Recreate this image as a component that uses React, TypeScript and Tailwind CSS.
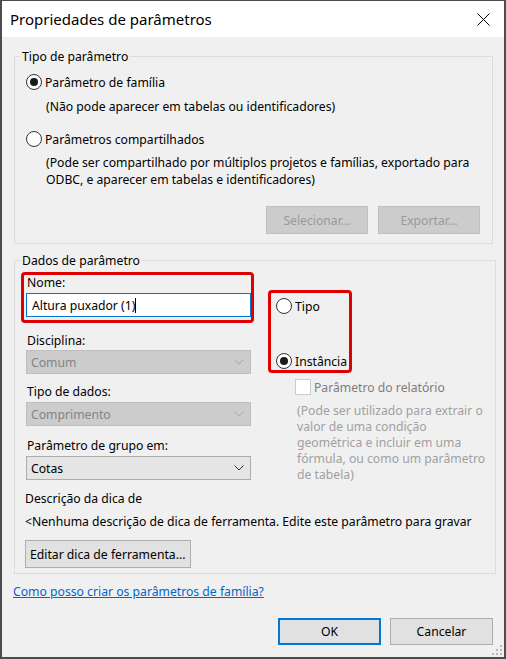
const Radio = ({ checked }: { checked?: boolean }) => (
  <span className="w-[16px] h-[16px] rounded-full border border-[#333333] bg-white flex items-center justify-center shrink-0">
    {checked && <span className="w-[8px] h-[8px] rounded-full bg-[#1b1b1b]" />}
  </span>
);

const Chevron = ({ color }: { color: string }) => (
  <svg width="10" height="6" viewBox="0 0 10 6" className="shrink-0">
    <path d="M0.5 0.5 L5 5 L9.5 0.5" fill="none" stroke={color} strokeWidth="1" />
  </svg>
);

const Select = ({ value, disabled }: { value: string; disabled?: boolean }) => (
  <div
    className={
      disabled
        ? "w-[225px] h-[24px] border border-[#bfbfbf] bg-[#cccccc] text-[#838383] flex items-center justify-between pl-[4px] pr-[6px]"
        : "w-[225px] h-[24px] border border-[#acacac] bg-[#e5e5e5] text-black flex items-center justify-between pl-[4px] pr-[6px]"
    }
  >
    <span>{value}</span>
    <Chevron color={disabled ? "#a8a8a8" : "#333333"} />
  </div>
);

const App = () => {
  return (
    <div className="relative w-[506px] h-[659px] border-x-2 border-b-2 border-t border-[#4c4c4c] bg-[#f0f0f0] flex flex-col text-[12.2px] leading-[15px] text-black font-['Noto_Sans',sans-serif]">
      <div className="h-[36px] bg-white flex items-center justify-between pl-[8px] pr-[14px] shrink-0">
        <span className="text-[15px]">Propriedades de parâmetros</span>
        <svg width="13" height="13" viewBox="0 0 13 13">
          <path d="M0.5 0.5 L12.5 12.5 M12.5 0.5 L0.5 12.5" stroke="#000" strokeWidth="1" />
        </svg>
      </div>

      <div className="flex flex-col px-[12px]">
        <fieldset className="mt-[12px] w-[479px] border border-[#dcdcdc] p-0">
          <legend className="ml-[5px] px-[2px] leading-[15px]">Tipo de parâmetro</legend>
          <div className="pl-[11px] pr-[12px] pb-[9px]">
            <label className="mt-[10px] h-[16px] flex items-center gap-[3px]">
              <Radio checked />
              <span>Parâmetro de família</span>
            </label>
            <p className="mt-[9px] leading-[16px] pl-[20px]">(Não pode aparecer em tabelas ou identificadores)</p>
            <label className="mt-[16px] h-[16px] flex items-center gap-[3px]">
              <Radio />
              <span>Parâmetros compartilhados</span>
            </label>
            <p className="mt-[7px] leading-[17px] pl-[20px]">
              (Pode ser compartilhado por múltiplos projetos e famílias, exportado para
              <br />
              ODBC, e aparecer em tabelas e identificadores)
            </p>
            <div className="mt-[18px] flex justify-end gap-[10px]">
              <button className="w-[102px] h-[28px] border border-[#bfbfbf] bg-[#cccccc] text-[#9a9a9a]">Selecionar...</button>
              <button className="w-[102px] h-[28px] border border-[#bfbfbf] bg-[#cccccc] text-[#9a9a9a]">Exportar...</button>
            </div>
          </div>
        </fieldset>

        <fieldset className="mt-[9px] w-[479px] border border-[#dcdcdc] p-0">
          <legend className="ml-[5px] px-[2px] leading-[15px]">Dados de parâmetro</legend>
          <div className="pl-[6px] pr-[10px] pb-[5px]">
            <div className="mt-[4px] flex gap-[14px]">
              <div className="w-[233px] flex flex-col">
                <div className="border-[3px] border-[#e00000] rounded-[4px] pl-[2px] pb-[3px]">
                  <div className="pl-[1px] leading-[15px]">Nome:</div>
                  <div className="mt-[3px] w-[225px] h-[24px] border border-[#0078d7] bg-white flex items-center pl-[5px]">
                    <span>Altura puxador (1)</span>
                    <span className="inline-block w-px h-[15px] bg-black" />
                  </div>
                </div>
                <div className="mt-[10px] pl-[6px] leading-[15px]">Disciplina:</div>
                <div className="mt-[2px] pl-[5px]">
                  <Select value="Comum" disabled />
                </div>
                <div className="mt-[10px] pl-[6px] leading-[15px]">Tipo de dados:</div>
                <div className="mt-[3px] pl-[5px]">
                  <Select value="Comprimento" disabled />
                </div>
                <div className="mt-[12px] pl-[6px] leading-[15px]">Parâmetro de grupo em:</div>
                <div className="mt-[3px] pl-[5px]">
                  <Select value="Cotas" />
                </div>
              </div>

              <div className="flex flex-col">
                <div className="mt-[18px] w-[84px] h-[83px] border-[3px] border-[#e00000] rounded-[4px] pl-[5px] pt-[5px] flex flex-col">
                  <label className="h-[16px] flex items-center gap-[3px]">
                    <Radio />
                    <span>Tipo</span>
                  </label>
                  <label className="mt-[39px] h-[16px] flex items-center gap-[3px]">
                    <Radio checked />
                    <span>Instância</span>
                  </label>
                </div>
                <label className="mt-[6px] ml-[27px] h-[16px] flex items-center gap-[3px]">
                  <span className="w-[16px] h-[16px] border border-[#cccccc] bg-white shrink-0" />
                  <span className="text-[#7d7d7d]">Parâmetro do relatório</span>
                </label>
                <p className="mt-[8px] ml-[29px] leading-[16px] text-[#a0a0a0] whitespace-nowrap">
                  (Pode ser utilizado para extrair o
                  <br />
                  valor de uma condição
                  <br />
                  geométrica e incluir em uma
                  <br />
                  fórmula, ou como um parâmetro
                  <br />
                  de tabela)
                </p>
              </div>
            </div>

            <div className="mt-[8px] ml-[4px] leading-[15px]">Descrição da dica de</div>
            <div className="mt-[8px] ml-[4px] leading-[15px] whitespace-nowrap">
              &lt;Nenhuma descrição de dica de ferramenta. Edite este parâmetro para gravar
            </div>
            <button className="mt-[11px] ml-[4px] w-[166px] h-[28px] border border-[#adadad] bg-[#e1e1e1] text-left pl-[4px]">
              Editar dica de ferramenta...
            </button>
          </div>
        </fieldset>

        <a className="mt-[10px] ml-[-1px] leading-[15px] text-[#0066cc] underline w-fit" href="#">
          Como posso criar os parâmetros de família?
        </a>

        <div className="mt-[19px] w-[479px] flex justify-end gap-[9px]">
          <button className="w-[103px] h-[27px] border-2 border-[#0078d7] bg-[#e1e1e1]">OK</button>
          <button className="w-[103px] h-[27px] border border-[#adadad] bg-[#e1e1e1]">Cancelar</button>
        </div>
      </div>

      <svg width="11" height="11" viewBox="0 0 11 11" className="absolute right-[1px] bottom-[1px]">
        <rect x="8" y="0" width="2" height="2" fill="#b8b8b8" />
        <rect x="4" y="4" width="2" height="2" fill="#b8b8b8" />
        <rect x="8" y="4" width="2" height="2" fill="#b8b8b8" />
        <rect x="0" y="8" width="2" height="2" fill="#b8b8b8" />
        <rect x="4" y="8" width="2" height="2" fill="#b8b8b8" />
        <rect x="8" y="8" width="2" height="2" fill="#b8b8b8" />
      </svg>
    </div>
  );
};

export default App;
